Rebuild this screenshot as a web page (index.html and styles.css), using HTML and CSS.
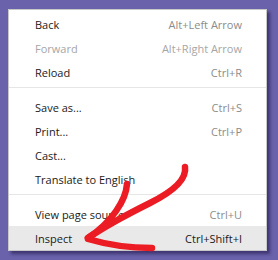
FILE: index.html
```html
<!DOCTYPE html>
<html>
<head>
<meta charset="utf-8">
<link rel="stylesheet" href="styles.css">
</head>
<body>
<div class="menu">
  <div class="group">
    <div class="item"><span>Back</span><span class="key">Alt+Left Arrow</span></div>
    <div class="item disabled"><span>Forward</span><span class="key">Alt+Right Arrow</span></div>
    <div class="item"><span>Reload</span><span class="key">Ctrl+R</span></div>
  </div>
  <div class="sep"></div>
  <div class="group">
    <div class="item"><span>Save as...</span><span class="key">Ctrl+S</span></div>
    <div class="item"><span>Print...</span><span class="key">Ctrl+P</span></div>
    <div class="item"><span>Cast...</span><span class="key"></span></div>
    <div class="item"><span>Translate to English</span><span class="key"></span></div>
  </div>
  <div class="sep"></div>
  <div class="group">
    <div class="item"><span>View page source</span><span class="key">Ctrl+U</span></div>
    <div class="item hover"><span>Inspect</span><span class="key">Ctrl+Shift+I</span></div>
  </div>
</div>
<svg class="arrow" width="278" height="260" viewBox="0 0 278 260">
  <g fill="none" stroke="#ec1c24" stroke-width="6.5" stroke-linecap="round" stroke-linejoin="round">
    <path d="M185 167 C187 180 172 192 150 203 C128 214 105 226 88 238"/>
    <path d="M127 184 C126 200 112 222 88 238"/>
    <path d="M88 239 C105 244 130 248 152 248"/>
  </g>
</svg>
</body>
</html>
```

FILE: styles.css
```css
html, body {
  margin: 0;
  padding: 0;
}
body {
  width: 278px;
  height: 260px;
  background: #6a62aa;
  padding: 9px 0 0 8px;
  box-sizing: border-box;
  position: relative;
  overflow: hidden;
  font-family: "Open Sans", "Noto Sans", sans-serif;
  font-size: 11px;
}
.menu {
  width: 259px;
  height: 242px;
  box-sizing: border-box;
  background: #fff;
  border: 1px solid #c8c8c8;
  box-shadow: 3px 3px 3px rgba(20, 10, 60, 0.5);
  padding-top: 2px;
}
.item {
  display: flex;
  justify-content: space-between;
  align-items: center;
  height: 24px;
  padding: 0 24px 0 26px;
  color: #1a1a1a;
}
.item .key {
  color: #8c8c8c;
}
.item.disabled {
  color: #a6a6a6;
}
.item.disabled .key {
  color: #a6a6a6;
}
.item.hover {
  background: #e9e9e9;
}
.item.hover .key {
  color: #1a1a1a;
}
.sep {
  height: 1px;
  background: #e6e6e6;
  margin: 3px 0 7px;
}
.arrow {
  position: absolute;
  left: 0;
  top: 0;
}
```
